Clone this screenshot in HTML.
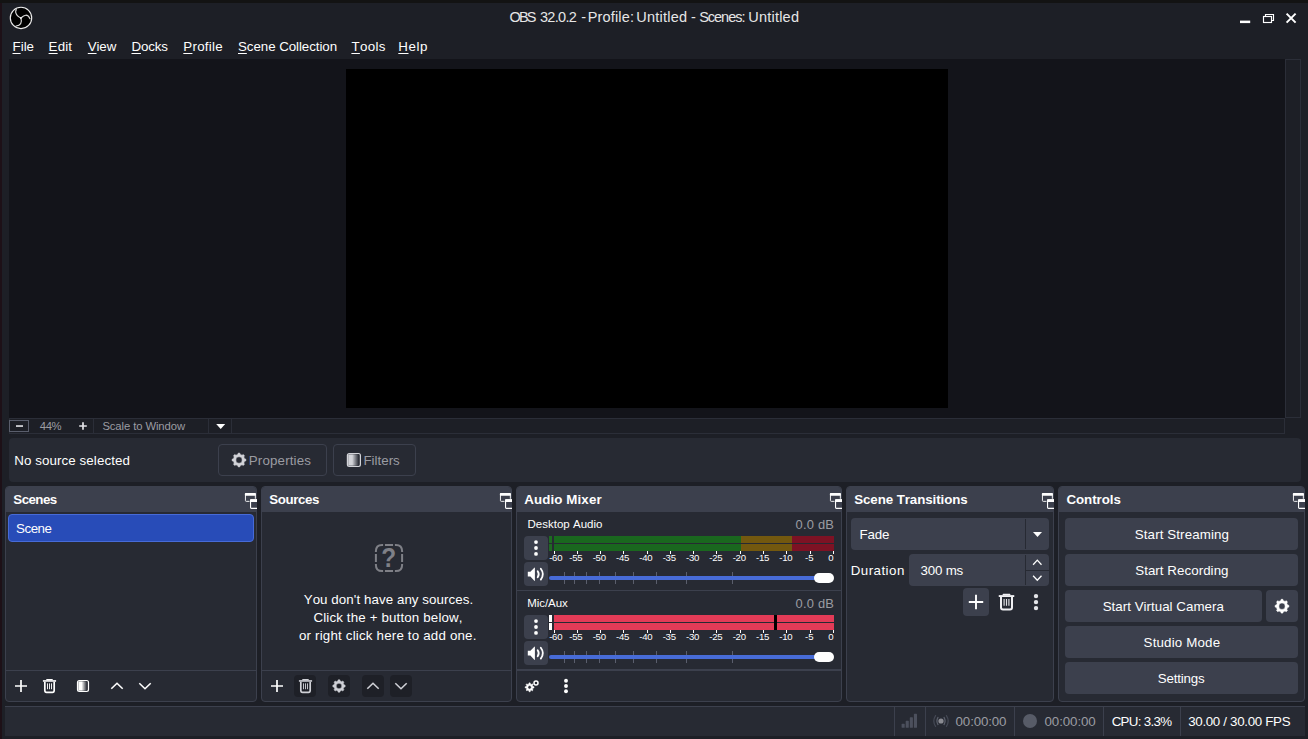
<!DOCTYPE html>
<html lang="en"><head><meta charset="utf-8"><title>OBS 32.0.2 - Profile: Untitled - Scenes: Untitled</title>
<style>
*{box-sizing:border-box;margin:0;padding:0}
html,body{width:1308px;height:739px;overflow:hidden}
body{background:#1d1f26;font-family:"Liberation Sans",sans-serif;position:relative;color:#fefefe}
.a{position:absolute}
.t{position:absolute;white-space:nowrap;line-height:1;font-kerning:none}
.t u{text-decoration:underline;text-decoration-thickness:1px;text-underline-offset:1.5px}
#deskTop{left:0;top:0;width:1308px;height:3px;background:#131313}
#deskLeft{left:0;top:3px;width:2px;height:736px;background:#1d1017}
#preview{left:9px;top:59px;width:1276px;height:359px;background:#13141a}
#canvas{left:346px;top:69px;width:602px;height:339px;background:#000}
#vscroll{left:1285px;top:59px;width:16px;height:359px;border:1px solid #2b2e38;background:#1d1f26}
#hbar{left:9px;top:418px;width:1276px;height:16px;border:1px solid #2b2e38;background:#1d1f26}
.vsep{position:absolute;width:1px;background:#2b2e38}
#zminus{left:9px;top:420px;width:20px;height:12px;border:1px solid #5a5e6c;}
#ctx{left:9px;top:438px;width:1292px;height:44px;background:#272a33;border-radius:4px}
.obtn{position:absolute;border:1px solid #3c404d;border-radius:4px;background:#272a33}
.dock{position:absolute;top:486px;height:216px;background:#272a33;border:1px solid #3c404d;border-radius:4px;overflow:hidden}
.dock .hd{position:absolute;left:-1px;top:-1px;right:-1px;height:26px;background:#3c404d}
.dock .tb{position:absolute;left:0;right:0;top:183px;height:1px;background:#3c404d}
.btn{position:absolute;background:#3c404d;border-radius:4px}
.dbtn{position:absolute;background:#1e2027;border-radius:4px;width:22px;height:22px;top:675px}
#scene{left:8px;top:514px;width:246px;height:28px;background:#284cb8;border:1px solid #476bd7;border-radius:4px}
#status{left:5px;top:706px;width:1300px;height:30px;background:#272a33;border-top:1px solid #3c404d}
.ssep{position:absolute;top:706px;width:1px;height:30px;background:#3c404d}
svg{position:absolute;overflow:visible}

</style></head>
<body>
<div class="a" id="deskTop"></div><div class="a" id="deskLeft"></div>
<!-- title bar -->
<svg id="logo" style="left:0;top:0" width="40" height="36" viewBox="0 0 40 36">
 <circle cx="21" cy="17.9" r="10.7" fill="#000" stroke="#ececec" stroke-width="1.15"/>
 <g fill="none" stroke="#dcdcdc" stroke-linecap="round">
  <path d="M20.9 18 C18.2 16.8 16.2 15 15.7 12.4 C15.5 11.4 15.8 10.4 16.35 9.6" stroke-width="1.15"/>
  <path d="M20.9 18 C22 17 24 15.3 25.7 15.2 C27.6 15.1 29.2 16.8 30 18.7" stroke-width="1.15"/>
  <path d="M20.9 18 C21.5 20 21.6 22.4 20.7 23.7 C19.6 25.3 18 25.8 16.1 26.05" stroke-width="1.15"/>
  <circle cx="20.9" cy="18.1" r="0.8" fill="#fff" stroke="none"/>
 </g>
</svg>
<svg style="left:1238px;top:10px" width="62" height="16" viewBox="1238 10 62 16">
 <rect x="1240" y="20.6" width="10.2" height="2.5" fill="#fff"/>
 <g fill="none" stroke="#fff" stroke-width="1.15">
  <path d="M1265.5 16 v-1.5 h8 v6 h-1.6"/>
  <rect x="1263.5" y="16.5" width="8" height="6"/>
 </g>
 <path d="M1286.6 13.6 L1295.6 22.6 M1295.6 13.6 L1286.6 22.6" stroke="#fff" stroke-width="2" fill="none"/>
</svg>
<!-- preview -->
<div class="a" id="preview"></div>
<div class="a" id="canvas"></div>
<div class="a" id="vscroll"></div>
<div class="a" id="hbar"></div>
<div class="a" id="zminus"></div>
<div class="vsep" style="left:93px;top:419px;height:14px"></div>
<div class="vsep" style="left:208px;top:419px;height:14px"></div>
<div class="vsep" style="left:231px;top:419px;height:14px"></div>
<svg style="left:0;top:412px" width="260" height="28" viewBox="0 412 260 28">
 <rect x="16" y="425.2" width="7" height="1.7" fill="#d8d8dc"/>
 <path d="M79.2 426 h7.6 M83 422.2 v7.6" stroke="#e4e4e8" stroke-width="1.7" fill="none"/>
 <path d="M216.2 424 h9 l-4.5 5 z" fill="#fff"/>
</svg>
<!-- context bar -->
<div class="a" id="ctx"></div>
<div class="obtn" style="left:218px;top:444px;width:109px;height:32px"></div>
<div class="obtn" style="left:333px;top:444px;width:83px;height:32px"></div>
<!-- docks -->
<div class="dock" style="left:5px;width:252px"><div class="hd"></div><div class="tb"></div></div>
<div class="dock" style="left:261px;width:251px"><div class="hd"></div><div class="tb"></div></div>
<div class="dock" style="left:516px;width:326px"><div class="hd"></div></div>
<div class="dock" style="left:846px;width:208px"><div class="hd"></div></div>
<div class="dock" style="left:1058px;width:247px"><div class="hd"></div></div>
<div class="a" id="scene"></div>
<!-- status -->
<div class="a" id="status"></div>
<div class="ssep" style="left:894px"></div><div class="ssep" style="left:925px"></div><div class="ssep" style="left:1014px"></div><div class="ssep" style="left:1103px"></div><div class="ssep" style="left:1180px"></div>
<div class="dbtn" style="left:294px"></div>
<div class="dbtn" style="left:328px"></div>
<div class="dbtn" style="left:362px"></div>
<div class="dbtn" style="left:390px"></div>
<div class="btn" style="left:524px;top:536px;width:24px;height:24px"></div>
<div class="btn" style="left:524px;top:562px;width:24px;height:24px"></div>
<div class="a" style="left:549px;top:536px;width:3px;height:7px;background:#1e6a22"></div>
<div class="a" style="left:554px;top:536px;width:280px;height:7px;background:linear-gradient(90deg,#1a671f 0 187px,#73580f 187px 238px,#7d1224 238px)"></div>
<div class="a" style="left:549px;top:544px;width:3px;height:7px;background:#1e6a22"></div>
<div class="a" style="left:554px;top:544px;width:280px;height:7px;background:linear-gradient(90deg,#1a671f 0 187px,#73580f 187px 238px,#7d1224 238px)"></div>
<div class="a" style="left:554px;top:551px;width:1px;height:3px;background:#fefefe"></div>
<div class="a" style="left:577px;top:551px;width:1px;height:3px;background:#fefefe"></div>
<div class="a" style="left:600px;top:551px;width:1px;height:3px;background:#fefefe"></div>
<div class="a" style="left:623px;top:551px;width:1px;height:3px;background:#fefefe"></div>
<div class="a" style="left:647px;top:551px;width:1px;height:3px;background:#fefefe"></div>
<div class="a" style="left:670px;top:551px;width:1px;height:3px;background:#fefefe"></div>
<div class="a" style="left:693px;top:551px;width:1px;height:3px;background:#fefefe"></div>
<div class="a" style="left:716px;top:551px;width:1px;height:3px;background:#fefefe"></div>
<div class="a" style="left:740px;top:551px;width:1px;height:3px;background:#fefefe"></div>
<div class="a" style="left:763px;top:551px;width:1px;height:3px;background:#fefefe"></div>
<div class="a" style="left:786px;top:551px;width:1px;height:3px;background:#fefefe"></div>
<div class="a" style="left:810px;top:551px;width:1px;height:3px;background:#fefefe"></div>
<div class="a" style="left:833px;top:551px;width:1px;height:3px;background:#fefefe"></div>
<div class="a" style="left:564px;top:572px;width:1px;height:12px;background:#5a5e6d"></div>
<div class="a" style="left:574px;top:572px;width:1px;height:12px;background:#5a5e6d"></div>
<div class="a" style="left:586px;top:572px;width:1px;height:12px;background:#5a5e6d"></div>
<div class="a" style="left:599px;top:572px;width:1px;height:12px;background:#5a5e6d"></div>
<div class="a" style="left:615px;top:572px;width:1px;height:12px;background:#5a5e6d"></div>
<div class="a" style="left:633px;top:572px;width:1px;height:12px;background:#5a5e6d"></div>
<div class="a" style="left:656px;top:572px;width:1px;height:12px;background:#5a5e6d"></div>
<div class="a" style="left:686px;top:572px;width:1px;height:12px;background:#5a5e6d"></div>
<div class="a" style="left:732px;top:572px;width:1px;height:12px;background:#5a5e6d"></div>
<div class="a" style="left:549px;top:576px;width:280px;height:4px;border-radius:2px;background:#476bd7"></div>
<div class="a" style="left:814px;top:573px;width:20px;height:10px;border-radius:5px;background:#fefefe"></div>
<div class="btn" style="left:524px;top:615px;width:24px;height:24px"></div>
<div class="btn" style="left:524px;top:641px;width:24px;height:24px"></div>
<div class="a" style="left:549px;top:615px;width:3px;height:7px;background:#ffffff"></div>
<div class="a" style="left:554px;top:615px;width:280px;height:7px;background:#e33b57"></div>
<div class="a" style="left:549px;top:623px;width:3px;height:7px;background:#ffffff"></div>
<div class="a" style="left:554px;top:623px;width:280px;height:7px;background:#e33b57"></div>
<div class="a" style="left:774px;top:615px;width:3px;height:15px;background:#000"></div>
<div class="a" style="left:554px;top:630px;width:1px;height:3px;background:#fefefe"></div>
<div class="a" style="left:577px;top:630px;width:1px;height:3px;background:#fefefe"></div>
<div class="a" style="left:600px;top:630px;width:1px;height:3px;background:#fefefe"></div>
<div class="a" style="left:623px;top:630px;width:1px;height:3px;background:#fefefe"></div>
<div class="a" style="left:647px;top:630px;width:1px;height:3px;background:#fefefe"></div>
<div class="a" style="left:670px;top:630px;width:1px;height:3px;background:#fefefe"></div>
<div class="a" style="left:693px;top:630px;width:1px;height:3px;background:#fefefe"></div>
<div class="a" style="left:716px;top:630px;width:1px;height:3px;background:#fefefe"></div>
<div class="a" style="left:740px;top:630px;width:1px;height:3px;background:#fefefe"></div>
<div class="a" style="left:763px;top:630px;width:1px;height:3px;background:#fefefe"></div>
<div class="a" style="left:786px;top:630px;width:1px;height:3px;background:#fefefe"></div>
<div class="a" style="left:810px;top:630px;width:1px;height:3px;background:#fefefe"></div>
<div class="a" style="left:833px;top:630px;width:1px;height:3px;background:#fefefe"></div>
<div class="a" style="left:564px;top:651px;width:1px;height:12px;background:#5a5e6d"></div>
<div class="a" style="left:574px;top:651px;width:1px;height:12px;background:#5a5e6d"></div>
<div class="a" style="left:586px;top:651px;width:1px;height:12px;background:#5a5e6d"></div>
<div class="a" style="left:599px;top:651px;width:1px;height:12px;background:#5a5e6d"></div>
<div class="a" style="left:615px;top:651px;width:1px;height:12px;background:#5a5e6d"></div>
<div class="a" style="left:633px;top:651px;width:1px;height:12px;background:#5a5e6d"></div>
<div class="a" style="left:656px;top:651px;width:1px;height:12px;background:#5a5e6d"></div>
<div class="a" style="left:686px;top:651px;width:1px;height:12px;background:#5a5e6d"></div>
<div class="a" style="left:732px;top:651px;width:1px;height:12px;background:#5a5e6d"></div>
<div class="a" style="left:549px;top:655px;width:280px;height:4px;border-radius:2px;background:#476bd7"></div>
<div class="a" style="left:814px;top:652px;width:20px;height:10px;border-radius:5px;background:#fefefe"></div>
<div class="a" style="left:517px;top:590px;width:324px;height:1px;background:#3c404d"></div>
<div class="a" style="left:517px;top:669px;width:324px;height:2px;background:#3c404d"></div>
<div class="btn" style="left:851px;top:518px;width:198px;height:32px"></div>
<div class="a" style="left:1025px;top:519px;width:1px;height:30px;background:#272a33"></div>
<div class="btn" style="left:909px;top:554px;width:140px;height:32px"></div>
<div class="a" style="left:1025px;top:555px;width:1px;height:30px;background:#272a33"></div>
<div class="a" style="left:1026px;top:570px;width:23px;height:1px;background:#272a33"></div>
<div class="btn" style="left:963px;top:588px;width:26px;height:28px"></div>
<div class="btn" style="left:1065px;top:518px;width:233px;height:32px"></div>
<div class="btn" style="left:1065px;top:554px;width:233px;height:32px"></div>
<div class="btn" style="left:1065px;top:590px;width:197px;height:32px"></div>
<div class="btn" style="left:1266px;top:590px;width:32px;height:32px"></div>
<div class="btn" style="left:1065px;top:626px;width:233px;height:32px"></div>
<div class="btn" style="left:1065px;top:662px;width:233px;height:32px"></div>
<svg style="left:0;top:0" width="1308" height="739" viewBox="0 0 1308 739"><defs><linearGradient id="fg" x1="0" x2="1" y1="0" y2="0"><stop offset="0" stop-color="#fefefe"/><stop offset="0.35" stop-color="#fefefe"/><stop offset="0.9" stop-color="#fefefe" stop-opacity="0.05"/></linearGradient><linearGradient id="fgg" x1="0" x2="1" y1="0" y2="0"><stop offset="0" stop-color="#d2d3d8"/><stop offset="0.35" stop-color="#d2d3d8"/><stop offset="0.9" stop-color="#d2d3d8" stop-opacity="0.05"/></linearGradient></defs>
<path d="M237.72 454.49 L238.08 453.16 Q239.00 452.96 239.92 453.16 L240.28 454.49 A5.66 5.66 0 0 1 241.99 455.20 L241.99 455.20 L243.19 454.51 Q243.98 455.02 244.49 455.81 L243.80 457.01 A5.66 5.66 0 0 1 244.51 458.72 L244.51 458.72 L245.84 459.08 Q246.04 460.00 245.84 460.92 L244.51 461.28 A5.66 5.66 0 0 1 243.80 462.99 L243.80 462.99 L244.49 464.19 Q243.98 464.98 243.19 465.49 L241.99 464.80 A5.66 5.66 0 0 1 240.28 465.51 L240.28 465.51 L239.92 466.84 Q239.00 467.04 238.08 466.84 L237.72 465.51 A5.66 5.66 0 0 1 236.01 464.80 L236.01 464.80 L234.81 465.49 Q234.02 464.98 233.51 464.19 L234.20 462.99 A5.66 5.66 0 0 1 233.49 461.28 L233.49 461.28 L232.16 460.92 Q231.96 460.00 232.16 459.08 L233.49 458.72 A5.66 5.66 0 0 1 234.20 457.01 L234.20 457.01 L233.51 455.81 Q234.02 455.02 234.81 454.51 L236.01 455.20 A5.66 5.66 0 0 1 237.72 454.49 Z M235.90 460.00 a3.11 3.11 0 1 0 6.21 0 a3.11 3.11 0 1 0 -6.21 0 Z" fill="#d2d3d8" fill-rule="evenodd" stroke="#d2d3d8" stroke-width="0.5" stroke-linejoin="round"/>
<rect x="348.19999999999993" y="454.29999999999995" width="11.399999999999999" height="11.399999999999999" fill="url(#fgg)"/><rect x="347.4" y="453.5" width="13.0" height="13.0" rx="1.9" fill="none" stroke="#d2d3d8" stroke-width="1.2"/>
<svg x="243" y="490" width="14" height="22" viewBox="243 490 14 22" style="overflow:hidden"><rect x="245.45" y="493.55" width="9.9" height="7.8" rx="0.8" fill="none" stroke="#fefefe" stroke-width="1.0" stroke-opacity="0.92"/><rect x="244.90" y="493" width="11" height="2.7" rx="0.7" fill="#fefefe"/><rect x="249.50" y="498.8" width="10" height="10.6" fill="#3c404d"/><rect x="250.55" y="499.85" width="9.9" height="8.5" rx="0.8" fill="none" stroke="#fefefe" stroke-width="1.1"/><rect x="250.00" y="499.3" width="11" height="2.8" rx="0.7" fill="#fefefe"/></svg>
<svg x="498" y="490" width="14" height="22" viewBox="498 490 14 22" style="overflow:hidden"><rect x="500.45" y="493.55" width="9.9" height="7.8" rx="0.8" fill="none" stroke="#fefefe" stroke-width="1.0" stroke-opacity="0.92"/><rect x="499.90" y="493" width="11" height="2.7" rx="0.7" fill="#fefefe"/><rect x="504.50" y="498.8" width="10" height="10.6" fill="#3c404d"/><rect x="505.55" y="499.85" width="9.9" height="8.5" rx="0.8" fill="none" stroke="#fefefe" stroke-width="1.1"/><rect x="505.00" y="499.3" width="11" height="2.8" rx="0.7" fill="#fefefe"/></svg>
<svg x="828" y="490" width="14" height="22" viewBox="828 490 14 22" style="overflow:hidden"><rect x="830.45" y="493.55" width="9.9" height="7.8" rx="0.8" fill="none" stroke="#fefefe" stroke-width="1.0" stroke-opacity="0.92"/><rect x="829.90" y="493" width="11" height="2.7" rx="0.7" fill="#fefefe"/><rect x="834.50" y="498.8" width="10" height="10.6" fill="#3c404d"/><rect x="835.55" y="499.85" width="9.9" height="8.5" rx="0.8" fill="none" stroke="#fefefe" stroke-width="1.1"/><rect x="835.00" y="499.3" width="11" height="2.8" rx="0.7" fill="#fefefe"/></svg>
<svg x="1040" y="490" width="14" height="22" viewBox="1040 490 14 22" style="overflow:hidden"><rect x="1042.45" y="493.55" width="9.9" height="7.8" rx="0.8" fill="none" stroke="#fefefe" stroke-width="1.0" stroke-opacity="0.92"/><rect x="1041.90" y="493" width="11" height="2.7" rx="0.7" fill="#fefefe"/><rect x="1046.50" y="498.8" width="10" height="10.6" fill="#3c404d"/><rect x="1047.55" y="499.85" width="9.9" height="8.5" rx="0.8" fill="none" stroke="#fefefe" stroke-width="1.1"/><rect x="1047.00" y="499.3" width="11" height="2.8" rx="0.7" fill="#fefefe"/></svg>
<svg x="1291" y="490" width="14" height="22" viewBox="1291 490 14 22" style="overflow:hidden"><rect x="1293.45" y="493.55" width="9.9" height="7.8" rx="0.8" fill="none" stroke="#fefefe" stroke-width="1.0" stroke-opacity="0.92"/><rect x="1292.90" y="493" width="11" height="2.7" rx="0.7" fill="#fefefe"/><rect x="1297.50" y="498.8" width="10" height="10.6" fill="#3c404d"/><rect x="1298.55" y="499.85" width="9.9" height="8.5" rx="0.8" fill="none" stroke="#fefefe" stroke-width="1.1"/><rect x="1298.00" y="499.3" width="11" height="2.8" rx="0.7" fill="#fefefe"/></svg>
<path d="M15 686 h12 M21 680 v12" stroke="#fefefe" stroke-width="1.7" fill="none"/>
<g fill="none" stroke="#fefefe"><path d="M42.91 680.94 H56.09" stroke-width="1.61"/><path d="M46.78 679.62 H52.22" stroke-width="1.27" stroke-linecap="round"/><path d="M44.83 681.75 V690.59 Q44.83 692.29 46.52 692.29 H52.48 Q54.17 692.29 54.17 690.59 V681.75" stroke-width="1.70"/><path d="M47.5 683.37 V689.23 M49.5 683.37 V689.23 M51.5 683.37 V689.23" stroke-width="1.0" stroke-opacity="0.92"/></g>
<rect x="78.30000000000001" y="681.3" width="9.399999999999999" height="9.399999999999999" fill="url(#fg)"/><rect x="77.5" y="680.5" width="11.0" height="11.0" rx="1.9" fill="none" stroke="#fefefe" stroke-width="1.2"/>
<path d="M111.3 688.75 L117 683.25 L122.7 688.75" stroke="#fefefe" stroke-width="1.6" fill="none"/>
<path d="M139.3 683.25 L145 688.75 L150.7 683.25" stroke="#fefefe" stroke-width="1.6" fill="none"/>
<path d="M271 686 h12 M277 680 v12" stroke="#fefefe" stroke-width="1.7" fill="none"/>
<g fill="none" stroke="#cfd0d6"><path d="M298.91 680.94 H312.09" stroke-width="1.61"/><path d="M302.78 679.62 H308.22" stroke-width="1.27" stroke-linecap="round"/><path d="M300.82 681.75 V690.59 Q300.82 692.29 302.52 692.29 H308.48 Q310.18 692.29 310.18 690.59 V681.75" stroke-width="1.70"/><path d="M303.5 683.37 V689.23 M305.5 683.37 V689.23 M307.5 683.37 V689.23" stroke-width="1.0" stroke-opacity="0.92"/></g>
<path d="M337.85 681.05 L338.17 679.86 Q339.00 679.68 339.83 679.86 L340.15 681.05 A5.08 5.08 0 0 1 341.69 681.69 L341.69 681.69 L342.76 681.07 Q343.47 681.53 343.93 682.24 L343.31 683.31 A5.08 5.08 0 0 1 343.95 684.85 L343.95 684.85 L345.14 685.17 Q345.32 686.00 345.14 686.83 L343.95 687.15 A5.08 5.08 0 0 1 343.31 688.69 L343.31 688.69 L343.93 689.76 Q343.47 690.47 342.76 690.93 L341.69 690.31 A5.08 5.08 0 0 1 340.15 690.95 L340.15 690.95 L339.83 692.14 Q339.00 692.32 338.17 692.14 L337.85 690.95 A5.08 5.08 0 0 1 336.31 690.31 L336.31 690.31 L335.24 690.93 Q334.53 690.47 334.07 689.76 L334.69 688.69 A5.08 5.08 0 0 1 334.05 687.15 L334.05 687.15 L332.86 686.83 Q332.68 686.00 332.86 685.17 L334.05 684.85 A5.08 5.08 0 0 1 334.69 683.31 L334.69 683.31 L334.07 682.24 Q334.53 681.53 335.24 681.07 L336.31 681.69 A5.08 5.08 0 0 1 337.85 681.05 Z M336.21 686.00 a2.79 2.79 0 1 0 5.58 0 a2.79 2.79 0 1 0 -5.58 0 Z" fill="#cfd0d6" fill-rule="evenodd" stroke="#cfd0d6" stroke-width="0.5" stroke-linejoin="round"/>
<path d="M367.3 688.75 L373 683.25 L378.7 688.75" stroke="#cfd0d6" stroke-width="1.6" fill="none"/>
<path d="M395.3 683.25 L401 688.75 L406.7 683.25" stroke="#cfd0d6" stroke-width="1.6" fill="none"/>
<path d="M375.9 552.1 V551.1 Q375.9 544.9 382.1 544.9 H383.1 M402.1 552.1 V551.1 Q402.1 544.9 395.9 544.9 H394.9 M402.1 563.9 V564.9 Q402.1 571.1 395.9 571.1 H394.9 M375.9 563.9 V564.9 Q375.9 571.1 382.1 571.1 H383.1 M384.95 544.9 H393.05 M384.95 571.1 H393.05 M375.9 553.95 V562.05 M402.1 553.95 V562.05" fill="none" stroke="#7f8087" stroke-width="2"/>
<circle cx="536" cy="542.1" r="1.9" fill="#fefefe"/><circle cx="536" cy="548.0" r="1.9" fill="#fefefe"/><circle cx="536" cy="553.9" r="1.9" fill="#fefefe"/>
<path d="M527.8 571.8 h2.6 l3.9 -4.1 q0.6 -0.5 0.6 0.4 v12.2 q0 0.9 -0.6 0.4 l-3.9 -4.1 h-2.6 z" fill="#fefefe"/><g fill="none" stroke="#fefefe" stroke-width="1.8" stroke-linecap="round"><path d="M537.6999999999999 571.2 q2.1 3 0 6"/><path d="M540.8 568.8 q4.1 5.4 0 10.8"/></g>
<circle cx="536" cy="621.1" r="1.9" fill="#fefefe"/><circle cx="536" cy="627.0" r="1.9" fill="#fefefe"/><circle cx="536" cy="632.9" r="1.9" fill="#fefefe"/>
<path d="M527.8 650.8 h2.6 l3.9 -4.1 q0.6 -0.5 0.6 0.4 v12.2 q0 0.9 -0.6 0.4 l-3.9 -4.1 h-2.6 z" fill="#fefefe"/><g fill="none" stroke="#fefefe" stroke-width="1.8" stroke-linecap="round"><path d="M537.6999999999999 650.2 q2.1 3 0 6"/><path d="M540.8 647.8 q4.1 5.4 0 10.8"/></g>
<circle cx="566" cy="680.8" r="1.95" fill="#fefefe"/><circle cx="566" cy="686.05" r="1.95" fill="#fefefe"/><circle cx="566" cy="691.3" r="1.95" fill="#fefefe"/>
<path d="M528.83 683.99 L529.01 682.89 Q529.60 682.76 530.19 682.89 L530.37 683.99 A3.40 3.40 0 0 1 531.40 684.42 L531.40 684.42 L532.30 683.76 Q532.81 684.09 533.14 684.60 L532.48 685.50 A3.40 3.40 0 0 1 532.91 686.53 L532.91 686.53 L534.01 686.71 Q534.14 687.30 534.01 687.89 L532.91 688.07 A3.40 3.40 0 0 1 532.48 689.10 L532.48 689.10 L533.14 690.00 Q532.81 690.51 532.30 690.84 L531.40 690.18 A3.40 3.40 0 0 1 530.37 690.61 L530.37 690.61 L530.19 691.71 Q529.60 691.84 529.01 691.71 L528.83 690.61 A3.40 3.40 0 0 1 527.80 690.18 L527.80 690.18 L526.90 690.84 Q526.39 690.51 526.06 690.00 L526.72 689.10 A3.40 3.40 0 0 1 526.29 688.07 L526.29 688.07 L525.19 687.89 Q525.06 687.30 525.19 686.71 L526.29 686.53 A3.40 3.40 0 0 1 526.72 685.50 L526.72 685.50 L526.06 684.60 Q526.39 684.09 526.90 683.76 L527.80 684.42 A3.40 3.40 0 0 1 528.83 683.99 Z M527.90 687.30 a1.70 1.70 0 1 0 3.40 0 a1.70 1.70 0 1 0 -3.40 0 Z" fill="#fefefe" fill-rule="evenodd" stroke="#fefefe" stroke-width="0.5" stroke-linejoin="round"/>
<circle cx="536" cy="683" r="2.0" fill="none" stroke="#fefefe" stroke-width="1.5"/>
<path d="M1033 532 h9 l-4.5 5 z" fill="#fefefe"/>
<path d="M1033.1 564.6999999999999 L1037.3 560.1 L1041.5 564.6999999999999" stroke="#fefefe" stroke-width="1.3" fill="none"/>
<path d="M1033.1 575.7 L1037.3 580.3 L1041.5 575.7" stroke="#fefefe" stroke-width="1.3" fill="none"/>
<path d="M968.8 602 h14.4 M976 594.8 v14.4" stroke="#fefefe" stroke-width="1.9" fill="none"/>
<g fill="none" stroke="#f0f0f3"><path d="M998.75 596.05 H1014.25" stroke-width="1.90"/><path d="M1003.30 594.50 H1009.70" stroke-width="1.50" stroke-linecap="round"/><path d="M1001.00 597.00 V607.40 Q1001.00 609.40 1003.00 609.40 H1010.00 Q1012.00 609.40 1012.00 607.40 V597.00" stroke-width="2.00"/><path d="M1004.1 598.90 V605.80 M1006.5 598.90 V605.80 M1008.9 598.90 V605.80" stroke-width="1.15" stroke-opacity="0.92"/></g>
<circle cx="1036" cy="596.1" r="2.2" fill="#e4e5e9"/><circle cx="1036" cy="602.1" r="2.2" fill="#e4e5e9"/><circle cx="1036" cy="608.1" r="2.2" fill="#e4e5e9"/>
<path d="M1280.72 600.69 L1281.08 599.36 Q1282.00 599.16 1282.92 599.36 L1283.28 600.69 A5.66 5.66 0 0 1 1284.99 601.40 L1284.99 601.40 L1286.19 600.71 Q1286.98 601.22 1287.49 602.01 L1286.80 603.21 A5.66 5.66 0 0 1 1287.51 604.92 L1287.51 604.92 L1288.84 605.28 Q1289.04 606.20 1288.84 607.12 L1287.51 607.48 A5.66 5.66 0 0 1 1286.80 609.19 L1286.80 609.19 L1287.49 610.39 Q1286.98 611.18 1286.19 611.69 L1284.99 611.00 A5.66 5.66 0 0 1 1283.28 611.71 L1283.28 611.71 L1282.92 613.04 Q1282.00 613.24 1281.08 613.04 L1280.72 611.71 A5.66 5.66 0 0 1 1279.01 611.00 L1279.01 611.00 L1277.81 611.69 Q1277.02 611.18 1276.51 610.39 L1277.20 609.19 A5.66 5.66 0 0 1 1276.49 607.48 L1276.49 607.48 L1275.16 607.12 Q1274.96 606.20 1275.16 605.28 L1276.49 604.92 A5.66 5.66 0 0 1 1277.20 603.21 L1277.20 603.21 L1276.51 602.01 Q1277.02 601.22 1277.81 600.71 L1279.01 601.40 A5.66 5.66 0 0 1 1280.72 600.69 Z M1278.89 606.20 a3.11 3.11 0 1 0 6.21 0 a3.11 3.11 0 1 0 -6.21 0 Z" fill="#fefefe" fill-rule="evenodd" stroke="#fefefe" stroke-width="0.5" stroke-linejoin="round"/>
<rect x="901.6" y="723.8" width="3.1" height="4" rx="0.6" fill="#4c505d"/>
<rect x="905.7" y="720.8" width="3.1" height="7" rx="0.6" fill="#4c505d"/>
<rect x="909.8" y="717.3" width="3.1" height="10.5" rx="0.6" fill="#4c505d"/>
<rect x="913.9" y="713.8" width="3.1" height="14" rx="0.6" fill="#4c505d"/>
<circle cx="941" cy="721" r="2.6" fill="#8a8b92"/>
<g fill="none" stroke="#5c606c" stroke-width="1.2" stroke-linecap="round"><path d="M938 717.4 q-2.2 3.6 0 7.2 M944 717.4 q2.2 3.6 0 7.2"/><path d="M935.6 715.6 q-3.6 5.4 0 10.8 M946.4 715.6 q3.6 5.4 0 10.8" stroke="#454955"/></g>
<circle cx="1030" cy="721" r="7" fill="#575b67"/></svg>
<span class="t" id="qm" style="left:379.9px;top:543.3px;font-size:28.4px;font-weight:700;color:#7f8087;transform:scaleX(.86);transform-origin:50% 50%">?</span>
<div id="labels">
<span class="t" style="left:509.60px;top:10.00px;font-size:14.5px;letter-spacing:-1.925px;color:#e6e6e6;">OBS</span>
<span class="t" style="left:540.00px;top:10.00px;font-size:14.5px;letter-spacing:-0.710px;color:#e6e6e6;">32.0.2</span>
<span class="t" style="left:581.30px;top:10.00px;font-size:14.5px;letter-spacing:0.000px;color:#e6e6e6;">-</span>
<span class="t" style="left:587.70px;top:10.00px;font-size:14.5px;letter-spacing:0.157px;color:#e6e6e6;">Profile:</span>
<span class="t" style="left:636.20px;top:10.00px;font-size:14.5px;letter-spacing:0.257px;color:#e6e6e6;">Untitled</span>
<span class="t" style="left:691.10px;top:10.00px;font-size:14.5px;letter-spacing:0.000px;color:#e6e6e6;">-</span>
<span class="t" style="left:699.20px;top:10.00px;font-size:14.5px;letter-spacing:-1.027px;color:#e6e6e6;">Scenes:</span>
<span class="t" style="left:748.30px;top:10.00px;font-size:14.5px;letter-spacing:0.214px;color:#e6e6e6;">Untitled</span>
<span class="t" style="left:12.50px;top:40.00px;font-size:13.33px;letter-spacing:0.012px;color:#fefefe;"><u>F</u>ile</span>
<span class="t" style="left:48.60px;top:40.00px;font-size:13.33px;letter-spacing:0.146px;color:#fefefe;"><u>E</u>dit</span>
<span class="t" style="left:87.80px;top:40.00px;font-size:13.33px;letter-spacing:-0.141px;color:#fefefe;"><u>V</u>iew</span>
<span class="t" style="left:131.50px;top:40.00px;font-size:13.33px;letter-spacing:-0.166px;color:#fefefe;"><u>D</u>ocks</span>
<span class="t" style="left:183.30px;top:40.00px;font-size:13.33px;letter-spacing:0.272px;color:#fefefe;"><u>P</u>rofile</span>
<span class="t" style="left:238.00px;top:40.00px;font-size:13.33px;letter-spacing:-0.060px;color:#fefefe;"><u>S</u>cene Collection</span>
<span class="t" style="left:351.40px;top:40.00px;font-size:13.33px;letter-spacing:0.338px;color:#fefefe;"><u>T</u>ools</span>
<span class="t" style="left:398.30px;top:40.00px;font-size:13.33px;letter-spacing:0.600px;color:#fefefe;"><u>H</u>elp</span>
<span class="t" style="left:39.80px;top:421.00px;font-size:11.3px;letter-spacing:-0.383px;color:#9b9ca2;">44%</span>
<span class="t" style="left:102.40px;top:421.00px;font-size:11.3px;letter-spacing:-0.106px;color:#9b9ca2;">Scale to Window</span>
<span class="t" style="left:14.20px;top:454.00px;font-size:13.33px;letter-spacing:0.095px;color:#fefefe;">No source selected</span>
<span class="t" style="left:248.80px;top:454.00px;font-size:13.33px;letter-spacing:0.158px;color:#9b9ca2;">Properties</span>
<span class="t" style="left:363.40px;top:454.00px;font-size:13.33px;letter-spacing:0.014px;color:#9b9ca2;">Filters</span>
<span class="t" style="left:13.30px;top:493.00px;font-size:13.33px;letter-spacing:-0.554px;color:#fefefe;font-weight:700;">Scenes</span>
<span class="t" style="left:269.20px;top:493.00px;font-size:13.33px;letter-spacing:-0.397px;color:#fefefe;font-weight:700;">Sources</span>
<span class="t" style="left:524.30px;top:493.00px;font-size:13.33px;letter-spacing:0.101px;color:#fefefe;font-weight:700;">Audio Mixer</span>
<span class="t" style="left:854.20px;top:493.00px;font-size:13.33px;letter-spacing:-0.079px;color:#fefefe;font-weight:700;">Scene Transitions</span>
<span class="t" style="left:1066.40px;top:493.00px;font-size:13.33px;letter-spacing:-0.054px;color:#fefefe;font-weight:700;">Controls</span>
<span class="t" style="left:16.10px;top:522.00px;font-size:13.33px;letter-spacing:-0.495px;color:#fefefe;">Scene</span>
<span class="t" style="left:303.70px;top:593.00px;font-size:13.33px;letter-spacing:0.067px;color:#fefefe;">You don&#39;t have any sources.</span>
<span class="t" style="left:313.40px;top:611.00px;font-size:13.33px;letter-spacing:0.148px;color:#fefefe;">Click the + button below,</span>
<span class="t" style="left:299.00px;top:629.00px;font-size:13.33px;letter-spacing:0.184px;color:#fefefe;">or right click here to add one.</span>
<span class="t" style="left:527.40px;top:519.00px;font-size:11.5px;letter-spacing:0.025px;color:#fefefe;">Desktop Audio</span>
<span class="t" style="left:795.60px;top:519.00px;font-size:12.9px;letter-spacing:0.206px;color:#9b9ca2;">0.0 dB</span>
<span class="t" style="left:527.20px;top:598.00px;font-size:11.5px;letter-spacing:-0.058px;color:#fefefe;">Mic/Aux</span>
<span class="t" style="left:795.60px;top:598.00px;font-size:12.9px;letter-spacing:0.206px;color:#9b9ca2;">0.0 dB</span>
<span class="t" style="left:859.50px;top:528.00px;font-size:13.33px;letter-spacing:-0.189px;color:#fefefe;">Fade</span>
<span class="t" style="left:850.70px;top:564.00px;font-size:13.33px;letter-spacing:0.462px;color:#fefefe;">Duration</span>
<span class="t" style="left:920.50px;top:564.00px;font-size:13.33px;letter-spacing:-0.189px;color:#fefefe;">300 ms</span>
<span class="t" style="left:1134.80px;top:528.00px;font-size:13.33px;letter-spacing:0.108px;color:#fefefe;">Start Streaming</span>
<span class="t" style="left:1135.20px;top:564.00px;font-size:13.33px;letter-spacing:0.051px;color:#fefefe;">Start Recording</span>
<span class="t" style="left:1102.70px;top:600.00px;font-size:13.33px;letter-spacing:0.022px;color:#fefefe;">Start Virtual Camera</span>
<span class="t" style="left:1143.60px;top:636.00px;font-size:13.33px;letter-spacing:0.168px;color:#fefefe;">Studio Mode</span>
<span class="t" style="left:1157.70px;top:672.00px;font-size:13.33px;letter-spacing:-0.171px;color:#fefefe;">Settings</span>
<span class="t" style="left:955.60px;top:715.00px;font-size:13.33px;letter-spacing:-0.138px;color:#9b9ca2;">00:00:00</span>
<span class="t" style="left:1044.50px;top:715.00px;font-size:13.33px;letter-spacing:-0.095px;color:#9b9ca2;">00:00:00</span>
<span class="t" style="left:1111.70px;top:715.00px;font-size:13.33px;letter-spacing:-0.697px;color:#fefefe;">CPU: 3.3%</span>
<span class="t" style="left:1188.20px;top:715.00px;font-size:13.33px;letter-spacing:-0.316px;color:#fefefe;">30.00 / 30.00 FPS</span>
<span class="t" style="left:549.20px;top:553.00px;font-size:9.6px;letter-spacing:-0.265px;color:#fefefe;">-60</span>
<span class="t" style="left:569.33px;top:553.00px;font-size:9.6px;letter-spacing:-0.265px;color:#fefefe;">-55</span>
<span class="t" style="left:592.67px;top:553.00px;font-size:9.6px;letter-spacing:-0.265px;color:#fefefe;">-50</span>
<span class="t" style="left:616.00px;top:553.00px;font-size:9.6px;letter-spacing:-0.265px;color:#fefefe;">-45</span>
<span class="t" style="left:639.33px;top:553.00px;font-size:9.6px;letter-spacing:-0.265px;color:#fefefe;">-40</span>
<span class="t" style="left:662.67px;top:553.00px;font-size:9.6px;letter-spacing:-0.265px;color:#fefefe;">-35</span>
<span class="t" style="left:686.00px;top:553.00px;font-size:9.6px;letter-spacing:-0.265px;color:#fefefe;">-30</span>
<span class="t" style="left:709.33px;top:553.00px;font-size:9.6px;letter-spacing:-0.265px;color:#fefefe;">-25</span>
<span class="t" style="left:732.67px;top:553.00px;font-size:9.6px;letter-spacing:-0.265px;color:#fefefe;">-20</span>
<span class="t" style="left:756.00px;top:553.00px;font-size:9.6px;letter-spacing:-0.265px;color:#fefefe;">-15</span>
<span class="t" style="left:779.33px;top:553.00px;font-size:9.6px;letter-spacing:-0.265px;color:#fefefe;">-10</span>
<span class="t" style="left:805.07px;top:553.00px;font-size:9.6px;letter-spacing:0.005px;color:#fefefe;">-5</span>
<span class="t" style="left:828.20px;top:553.00px;font-size:9.6px;letter-spacing:0.000px;color:#fefefe;">0</span>
<span class="t" style="left:549.20px;top:632.00px;font-size:9.6px;letter-spacing:-0.265px;color:#fefefe;">-60</span>
<span class="t" style="left:569.33px;top:632.00px;font-size:9.6px;letter-spacing:-0.265px;color:#fefefe;">-55</span>
<span class="t" style="left:592.67px;top:632.00px;font-size:9.6px;letter-spacing:-0.265px;color:#fefefe;">-50</span>
<span class="t" style="left:616.00px;top:632.00px;font-size:9.6px;letter-spacing:-0.265px;color:#fefefe;">-45</span>
<span class="t" style="left:639.33px;top:632.00px;font-size:9.6px;letter-spacing:-0.265px;color:#fefefe;">-40</span>
<span class="t" style="left:662.67px;top:632.00px;font-size:9.6px;letter-spacing:-0.265px;color:#fefefe;">-35</span>
<span class="t" style="left:686.00px;top:632.00px;font-size:9.6px;letter-spacing:-0.265px;color:#fefefe;">-30</span>
<span class="t" style="left:709.33px;top:632.00px;font-size:9.6px;letter-spacing:-0.265px;color:#fefefe;">-25</span>
<span class="t" style="left:732.67px;top:632.00px;font-size:9.6px;letter-spacing:-0.265px;color:#fefefe;">-20</span>
<span class="t" style="left:756.00px;top:632.00px;font-size:9.6px;letter-spacing:-0.265px;color:#fefefe;">-15</span>
<span class="t" style="left:779.33px;top:632.00px;font-size:9.6px;letter-spacing:-0.265px;color:#fefefe;">-10</span>
<span class="t" style="left:805.07px;top:632.00px;font-size:9.6px;letter-spacing:0.005px;color:#fefefe;">-5</span>
<span class="t" style="left:828.20px;top:632.00px;font-size:9.6px;letter-spacing:0.000px;color:#fefefe;">0</span>
</div>
</body></html>
